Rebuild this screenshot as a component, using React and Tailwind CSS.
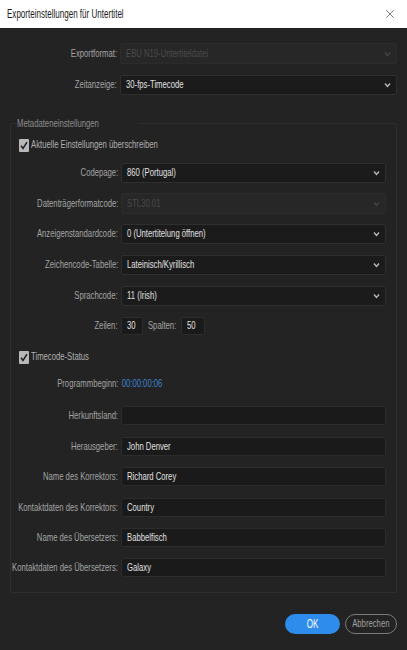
import React from 'react';
import { X } from 'lucide-react';

const FONT = { fontFamily: '"Liberation Sans", Arial, sans-serif' };

// The dialog text is rendered in a narrow face; squeeze glyphs horizontally
const T = ({ children, className = '', origin = 'origin-left' }) => (
    <span className={`inline-block shrink-0 whitespace-nowrap scale-x-[0.67] ${origin} ${className}`}>{children}</span>
);

const Chevron = ({ disabled }) => (
    <svg width="7" height="6" viewBox="0 0 7 6" className="shrink-0">
        <path d="M1 1.5 L3.5 4.5 L6 1.5" fill="none" stroke={disabled ? '#444' : '#b8b8b8'} strokeWidth="1.4" />
    </svg>
);

// Label + field row, label column ends at x=120
const Row = ({ label, children, className = '' }) => (
    <div className={`flex items-center ${className}`}>
        <div className="w-[110px] shrink-0 flex justify-end pr-[3px] text-[11.5px] text-[#a3a3a3]">
            <T origin="origin-right">{label}</T>
        </div>
        <div className="flex-1 h-full flex items-center">{children}</div>
    </div>
);

const Select = ({ value, disabled }) => (
    <div
        className={`w-full h-full flex items-center justify-between pl-[5px] pr-[5px] border rounded-[2px] text-[11.5px] overflow-hidden ${
            disabled
                ? 'bg-[#272727] border-[#2c2c2c] text-[#4a4a4a]'
                : 'bg-[#1b1b1b] border-[#2f2f2f] text-[#e0e0e0]'
        }`}
    >
        <T>{value}</T>
        <Chevron disabled={disabled} />
    </div>
);

const TextField = ({ value, className = 'w-full' }) => (
    <div className={`${className} h-full flex items-center pl-[5px] bg-[#1a1a1a] border border-[#2c2c2c] rounded-[2px] text-[11.5px] text-[#e0e0e0] overflow-hidden`}>
        <T>{value}</T>
    </div>
);

const Check = ({ label, className = '' }) => (
    <div className={`flex items-center h-[14px] pl-[8px] ${className}`}>
        <div className="w-[10px] h-[13px] bg-[#b8b8b8] rounded-[1px] flex items-center justify-center shrink-0">
            <svg width="8" height="9" viewBox="0 0 8 9">
                <path d="M1 4.8 L3 7.4 L7 1.2" fill="none" stroke="#1e1e1e" strokeWidth="1.5" />
            </svg>
        </div>
        <T className="ml-[2px] text-[11.5px] text-[#b0b0b0]">{label}</T>
    </div>
);

export default function App() {
    return (
        <div className="w-[407px] h-[650px] bg-[#232323] flex flex-col select-none overflow-hidden" style={FONT}>
            {/* Title bar */}
            <div className="h-[28px] bg-white flex items-center justify-between pl-[7px] pr-[10px] shrink-0">
                <T className="text-[12px] text-[#1a1a1a]">Exporteinstellungen für Untertitel</T>
                <X size={14} strokeWidth={1.1} color="#333" />
            </div>

            <div className="flex flex-col pt-[15px] pl-[10px] pr-[10px]">
                <Row label="Exportformat:" className="h-[21px]">
                    <Select value="EBU N19-Untertiteldatei" disabled />
                </Row>
                <Row label="Zeitanzeige:" className="h-[20px] mt-[11px]">
                    <Select value="30-fps-Timecode" />
                </Row>

                <fieldset className="mt-[21px] border border-[#2e2e2e] rounded-[2px] pr-[10px] pb-[15px]">
                    <legend className="ml-[5px] px-[1px] text-[11.5px] leading-[14px] text-[#8e8e8e]">
                        <T>Metadateneinstellungen</T>
                    </legend>

                    <Check label="Aktuelle Einstellungen überschreiben" className="mt-[8px]" />

                    <Row label="Codepage:" className="h-[20px] mt-[11px]">
                        <Select value="860 (Portugal)" />
                    </Row>
                    <Row label="Datenträgerformatcode:" className="h-[21px] mt-[10px]">
                        <Select value="STL30.01" disabled />
                    </Row>
                    <Row label="Anzeigenstandardcode:" className="h-[20px] mt-[10px]">
                        <Select value="0 (Untertitelung öffnen)" />
                    </Row>
                    <Row label="Zeichencode-Tabelle:" className="h-[20px] mt-[11px]">
                        <Select value="Lateinisch/Kyrillisch" />
                    </Row>
                    <Row label="Sprachcode:" className="h-[20px] mt-[11px]">
                        <Select value="11 (Irish)" />
                    </Row>
                    <Row label="Zeilen:" className="h-[18px] mt-[11px]">
                        <TextField value="30" className="w-[22px]" />
                        <div className="w-[38px] flex justify-center text-[11.5px] text-[#a3a3a3]">
                            <T origin="origin-center">Spalten:</T>
                        </div>
                        <TextField value="50" className="w-[24px]" />
                    </Row>

                    <Check label="Timecode-Status" className="mt-[15px]" />

                    <Row label="Programmbeginn:" className="h-[20px] mt-[10px]">
                        <T className="pl-[1px] text-[11.5px] text-[#3d82d2]">00:00:00:06</T>
                    </Row>
                    <Row label="Herkunftsland:" className="h-[19px] mt-[12px]">
                        <TextField value="" />
                    </Row>
                    <Row label="Herausgeber:" className="h-[19px] mt-[12px]">
                        <TextField value="John Denver" />
                    </Row>
                    <Row label="Name des Korrektors:" className="h-[19px] mt-[11px]">
                        <TextField value="Richard Corey" />
                    </Row>
                    <Row label="Kontaktdaten des Korrektors:" className="h-[19px] mt-[12px]">
                        <TextField value="Country" />
                    </Row>
                    <Row label="Name des Übersetzers:" className="h-[19px] mt-[11px]">
                        <TextField value="Babbelfisch" />
                    </Row>
                    <Row label="Kontaktdaten des Übersetzers:" className="h-[19px] mt-[11px]">
                        <TextField value="Galaxy" />
                    </Row>
                </fieldset>

                <div className="flex justify-end gap-[5px] mt-[21px]">
                    <button className="w-[55px] h-[20px] rounded-full bg-[#2d8cec] text-white text-[12px] flex items-center justify-center">
                        <T origin="origin-center">OK</T>
                    </button>
                    <button className="w-[52px] h-[20px] rounded-full border border-[#7a7a7a] text-[#a0a0a0] text-[11.5px] flex items-center justify-center">
                        <T origin="origin-center">Abbrechen</T>
                    </button>
                </div>
            </div>
        </div>
    );
}
